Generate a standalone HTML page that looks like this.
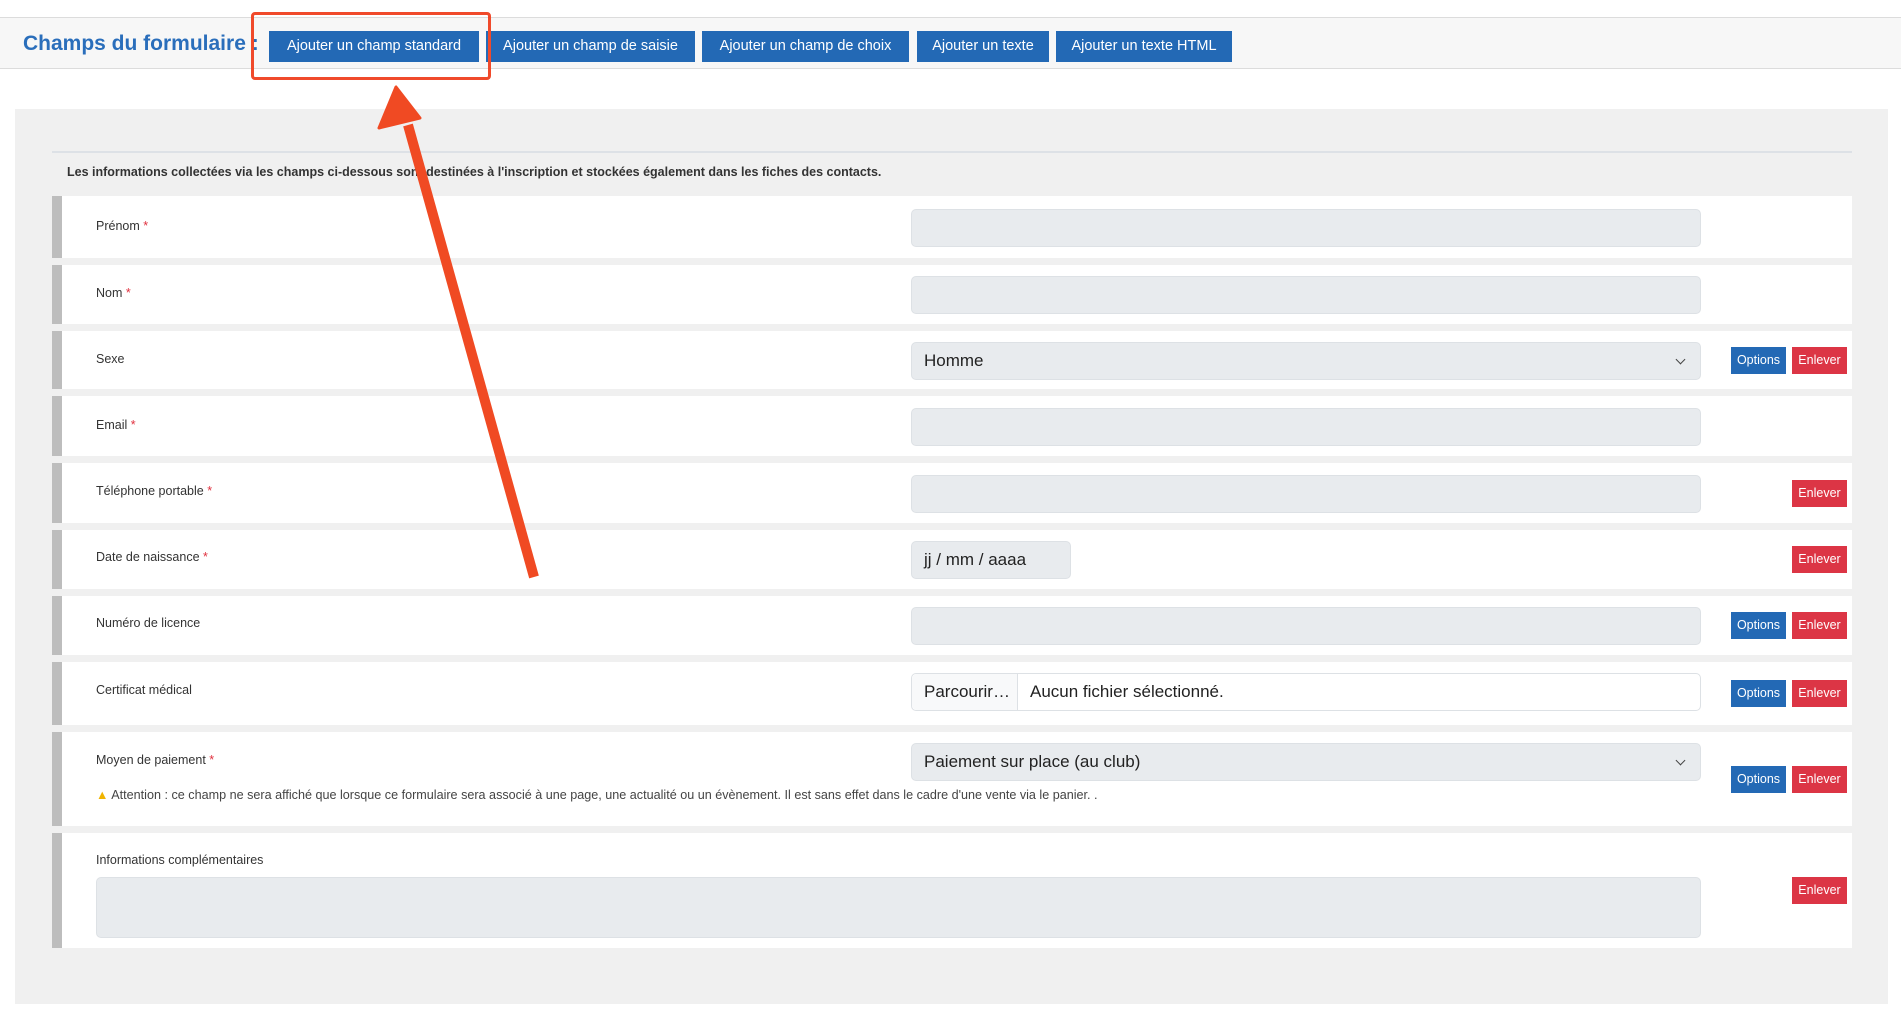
<!DOCTYPE html>
<html><head><meta charset="utf-8"><style>
*{box-sizing:border-box;margin:0;padding:0}
body{width:1901px;height:1013px;background:#fff;font-family:"Liberation Sans",Arial,sans-serif;position:relative;overflow:hidden}
.abs{position:absolute}
.hdr{left:0;top:17px;width:1901px;height:52px;background:#f7f7f7;border-top:1px solid #dcdcdc;border-bottom:1px solid #dcdcdc}
.title{left:23px;top:31px;font-size:21px;font-weight:bold;color:#2a6ebb;line-height:26px}
.tb{top:31px;height:31px;background:#2369b5;color:#fff;font-size:14.5px;line-height:31px;text-align:center}
.panel{left:15px;top:109px;width:1873px;height:895px;background:#f0f0f0}
.row{left:52px;width:1800px;background:#fff;border-left:10px solid #bdbdbd}
.lbl{position:absolute;left:34px;font-size:12.5px;color:#333}
.req{color:#e0303e}
.inp{position:absolute;left:849px;width:790px;height:38px;background:#e8ebee;border:1px solid #dde1e5;border-radius:5px;font-size:17px;color:#222;line-height:36px;padding-left:12px}
.btn{position:absolute;height:27px;line-height:27px;font-size:12.5px;color:#fff;text-align:center}
.opt{left:1669px;width:55px;background:#2369b5}
.enl{left:1730px;width:55px;background:#dc3545}
.chev{position:absolute;right:16px;top:13px;width:7px;height:7px;border-right:1.5px solid #444;border-bottom:1.5px solid #444;transform:rotate(45deg)}
</style></head><body>
<div class="abs hdr"></div>
<div class="abs title">Champs du formulaire :</div>
<div class="abs tb" style="left:269px;width:210px">Ajouter un champ standard</div>
<div class="abs tb" style="left:486px;width:209px">Ajouter un champ de saisie</div>
<div class="abs tb" style="left:702px;width:207px">Ajouter un champ de choix</div>
<div class="abs tb" style="left:917px;width:132px">Ajouter un texte</div>
<div class="abs tb" style="left:1056px;width:176px">Ajouter un texte HTML</div>
<div class="abs" style="left:251px;top:12px;width:240px;height:68px;border:3px solid #f04a2b;border-radius:4px"></div>

<div class="abs panel"></div>
<div class="abs" style="left:52px;top:151px;width:1800px;height:2px;background:#dde1e6"></div>
<div class="abs" style="left:67px;top:165px;font-size:12.5px;font-weight:bold;color:#333">Les informations collectées via les champs ci-dessous sont destinées à l'inscription et stockées également dans les fiches des contacts.</div>

<div class="abs row" style="top:196px;height:62px"><div class="lbl" style="top:23px">Prénom <span class="req">*</span></div><div class="inp" style="top:13px"></div></div>
<div class="abs row" style="top:265px;height:59px"><div class="lbl" style="top:21px">Nom <span class="req">*</span></div><div class="inp" style="top:11px"></div></div>
<div class="abs row" style="top:331px;height:58px"><div class="lbl" style="top:21px">Sexe</div><div class="inp" style="top:11px">Homme<div class="chev"></div></div><div class="btn opt" style="top:16px">Options</div><div class="btn enl" style="top:16px">Enlever</div></div>
<div class="abs row" style="top:396px;height:60px"><div class="lbl" style="top:22px">Email <span class="req">*</span></div><div class="inp" style="top:12px"></div></div>
<div class="abs row" style="top:463px;height:60px"><div class="lbl" style="top:21px">Téléphone portable <span class="req">*</span></div><div class="inp" style="top:12px"></div><div class="btn enl" style="top:17px">Enlever</div></div>
<div class="abs row" style="top:530px;height:59px"><div class="lbl" style="top:20px">Date de naissance <span class="req">*</span></div><div class="inp" style="top:11px;width:160px">jj / mm / aaaa</div><div class="btn enl" style="top:16px">Enlever</div></div>
<div class="abs row" style="top:596px;height:59px"><div class="lbl" style="top:20px">Numéro de licence</div><div class="inp" style="top:11px"></div><div class="btn opt" style="top:16px">Options</div><div class="btn enl" style="top:16px">Enlever</div></div>
<div class="abs row" style="top:662px;height:63px"><div class="lbl" style="top:21px">Certificat médical</div><div class="inp" style="top:11px;background:#fff;padding-left:0"><span style="display:inline-block;width:106px;height:36px;background:#f8f9fa;border-right:1px solid #dde1e5;padding-left:12px;border-radius:5px 0 0 5px">Parcourir…</span><span style="padding-left:12px">Aucun fichier sélectionné.</span></div><div class="btn opt" style="top:18px">Options</div><div class="btn enl" style="top:18px">Enlever</div></div>
<div class="abs row" style="top:732px;height:94px"><div class="lbl" style="top:21px">Moyen de paiement <span class="req">*</span></div><div class="inp" style="top:11px">Paiement sur place (au club)<div class="chev"></div></div>
<div class="lbl" style="top:56px;font-size:12.6px;color:#444"><span style="color:#f0b400">▲</span> Attention : ce champ ne sera affiché que lorsque ce formulaire sera associé à une page, une actualité ou un évènement. Il est sans effet dans le cadre d'une vente via le panier. .</div>
<div class="btn opt" style="top:34px">Options</div><div class="btn enl" style="top:34px">Enlever</div></div>
<div class="abs row" style="top:833px;height:115px"><div class="lbl" style="top:20px">Informations complémentaires</div><div class="inp" style="top:44px;left:34px;width:1605px;height:61px"></div><div class="btn enl" style="top:44px">Enlever</div></div>

<svg class="abs" style="left:0;top:0" width="1901" height="1013"><line x1="534" y1="577" x2="408" y2="125" stroke="#f04a23" stroke-width="10"/><polygon points="396,87 379,128 420,118" fill="#f04a23" stroke="#f04a23" stroke-width="3" stroke-linejoin="round"/></svg>
</body></html>
